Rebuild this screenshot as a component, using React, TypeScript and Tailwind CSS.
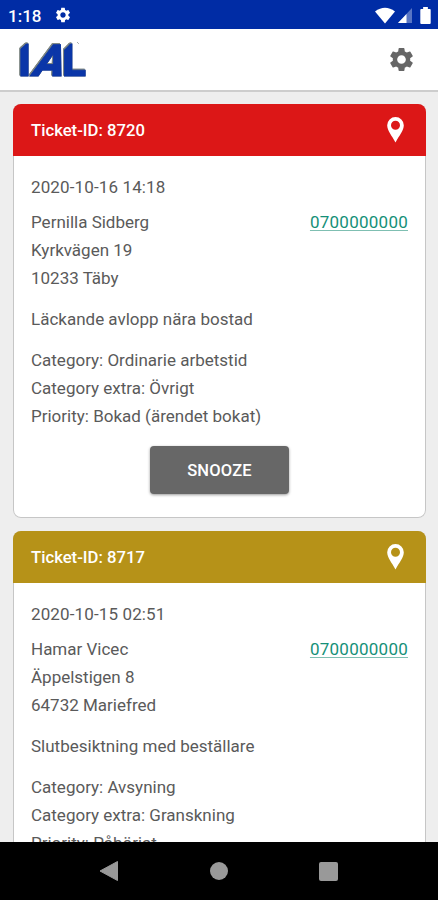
import { MdSettings } from "react-icons/md";

interface Ticket {
  id: number;
  headerClass: string;
  date: string;
  name: string;
  street: string;
  city: string;
  phone: string;
  description: string;
  category: string;
  categoryExtra: string;
  priority: string;
}

const tickets: Ticket[] = [
  {
    id: 8720,
    headerClass: "bg-[#dc1717]",
    date: "2020-10-16 14:18",
    name: "Pernilla Sidberg",
    street: "Kyrkvägen 19",
    city: "10233 Täby",
    phone: "0700000000",
    description: "Läckande avlopp nära bostad",
    category: "Ordinarie arbetstid",
    categoryExtra: "Övrigt",
    priority: "Bokad (ärendet bokat)",
  },
  {
    id: 8717,
    headerClass: "bg-[#b69218]",
    date: "2020-10-15 02:51",
    name: "Hamar Vicec",
    street: "Äppelstigen 8",
    city: "64732 Mariefred",
    phone: "0700000000",
    description: "Slutbesiktning med beställare",
    category: "Avsyning",
    categoryExtra: "Granskning",
    priority: "Påbörjat",
  },
];

function StatusBar() {
  return (
    <div className="flex h-[29px] shrink-0 items-center bg-[#002ca5] pl-2 pr-[7px] text-white">
      <span className="pt-[3px] text-[17px] font-medium leading-none">1:18</span>
      <MdSettings className="ml-[13px] mt-[1px] h-[18px] w-[18px]" />
      <div className="ml-auto flex items-center pt-[1px]">
        <svg width="20" height="17" viewBox="0 0 20 17" fill="currentColor">
          <path d="M0 4.5Q10-3 20 4.5L10 16.5Z" />
        </svg>
        <svg className="ml-[3px]" width="14" height="15" viewBox="0 0 14 15" fill="currentColor">
          <path d="M14 0V15H0Z" opacity="0.35" />
          <path d="M8.5 6V15H0Z" />
        </svg>
        <svg className="ml-[8px]" width="11" height="17" viewBox="0 0 11 18" fill="currentColor">
          <path d="M3 0H8V2H10Q11 2 11 3V17Q11 18 10 18H1Q0 18 0 17V3Q0 2 1 2H3Z" />
        </svg>
      </div>
    </div>
  );
}

function Logo() {
  return (
    <svg
      className="[filter:drop-shadow(0.7px_0.6px_0_#7d8682)_drop-shadow(-0.7px_-0.6px_0_#7d8682)]"
      width="76"
      height="61"
      viewBox="0 0 76 61"
      aria-label="IAL"
    >
      <defs>
        <clipPath id="chamfer-i">
          <path d="M0 61V22L10 13H20V61Z" />
        </clipPath>
        <clipPath id="chamfer-l">
          <path d="M44 61V23L54 13H76V61Z" />
        </clipPath>
      </defs>
      <g
        fontFamily="Roboto, sans-serif"
        fontWeight="900"
        fontSize="44"
        fill="#0b36a8"
        stroke="#0b36a8"
        strokeWidth="0.8"
      >
        <g clipPath="url(#chamfer-i)">
          <text x="0" y="46.5" textLength="13" lengthAdjust="spacingAndGlyphs">I</text>
        </g>
        <text transform="translate(12 46.5) skewX(-20)" textLength="31" lengthAdjust="spacingAndGlyphs">A</text>
        <g clipPath="url(#chamfer-l)">
          <text x="44" y="46.5" textLength="24" lengthAdjust="spacingAndGlyphs">L</text>
        </g>
      </g>
      <circle cx="60.5" cy="14.5" r="0.4" fill="#999" />
    </svg>
  );
}

function AppBar() {
  return (
    <header className="flex h-[63px] shrink-0 items-center justify-between border-b-2 border-[#cdcdcd] bg-white pl-[18px] pr-[22px]">
      <Logo />
      <MdSettings className="h-[29px] w-[29px] text-[#666]" />
    </header>
  );
}

function PinIcon() {
  return (
    <svg width="17" height="26" viewBox="0 0 17 26" fill="currentColor">
      <path
        fillRule="evenodd"
        d="M8.5 0A8.3 8.3 0 0 0 .2 8.3C.2 14 4.8 18.5 8.5 25.5C12.2 18.5 16.8 14 16.8 8.3A8.3 8.3 0 0 0 8.5 0ZM8.5 3.8A4.5 4.5 0 1 1 8.5 12.8A4.5 4.5 0 0 1 8.5 3.8Z"
      />
    </svg>
  );
}

function TicketCard({ ticket }: { ticket: Ticket }) {
  return (
    <article className="shrink-0 rounded-lg bg-white shadow-[inset_0_0_0_1px_#c6c6c6]">
      <div
        className={`flex h-[52px] items-center justify-between rounded-t-lg pl-[18px] pr-[22px] text-white ${ticket.headerClass}`}
      >
        <h2 className="pt-[2px] text-[16.7px] font-medium">Ticket-ID: {ticket.id}</h2>
        <PinIcon />
      </div>
      <div className="px-[18px] pb-6 pt-[17px] text-[17px] leading-7 text-[#5a5a5a]">
        <p className="tracking-[0.13px]">{ticket.date}</p>
        <div className="mt-[7px] flex justify-between">
          <div>
            <p>{ticket.name}</p>
            <p>{ticket.street}</p>
            <p>{ticket.city}</p>
          </div>
          <a className="tracking-[0.25px] text-[#159078] underline decoration-[#7fbfb2] decoration-1 underline-offset-2">
            {ticket.phone}
          </a>
        </div>
        <p className="mt-[13px]">{ticket.description}</p>
        <div className="mt-[13px]">
          <p>Category: {ticket.category}</p>
          <p>Category extra: {ticket.categoryExtra}</p>
          <p>Priority: {ticket.priority}</p>
        </div>
        <button className="mx-auto mt-4 block h-12 w-[139px] rounded bg-[#676767] pt-[2px] text-[16.5px] font-medium tracking-[0.2px] text-white shadow-[0_1px_3px_rgba(0,0,0,0.4)]">
          SNOOZE
        </button>
      </div>
    </article>
  );
}

function NavigationBar() {
  return (
    <nav className="flex h-[58px] shrink-0 items-center justify-between bg-black pl-[99px] pr-[100px] text-[#999]">
      <svg width="20" height="20" viewBox="0 0 20 20" fill="currentColor">
        <path d="M18.5 .5V19.5L1 10Z" stroke="currentColor" strokeLinejoin="round" />
      </svg>
      <div className="h-[18px] w-[18px] rounded-full bg-[#999]" />
      <div className="h-[19px] w-[19px] rounded-[2px] bg-[#999]" />
    </nav>
  );
}

export default function App() {
  return (
    <div className="flex h-screen w-full flex-col overflow-hidden bg-[#eee] font-[Roboto,sans-serif]">
      <StatusBar />
      <AppBar />
      <main className="flex min-h-0 flex-1 flex-col gap-[13px] overflow-hidden px-3 pl-[13px] pt-3">
        {tickets.map((ticket) => (
          <TicketCard key={ticket.id} ticket={ticket} />
        ))}
      </main>
      <NavigationBar />
    </div>
  );
}
